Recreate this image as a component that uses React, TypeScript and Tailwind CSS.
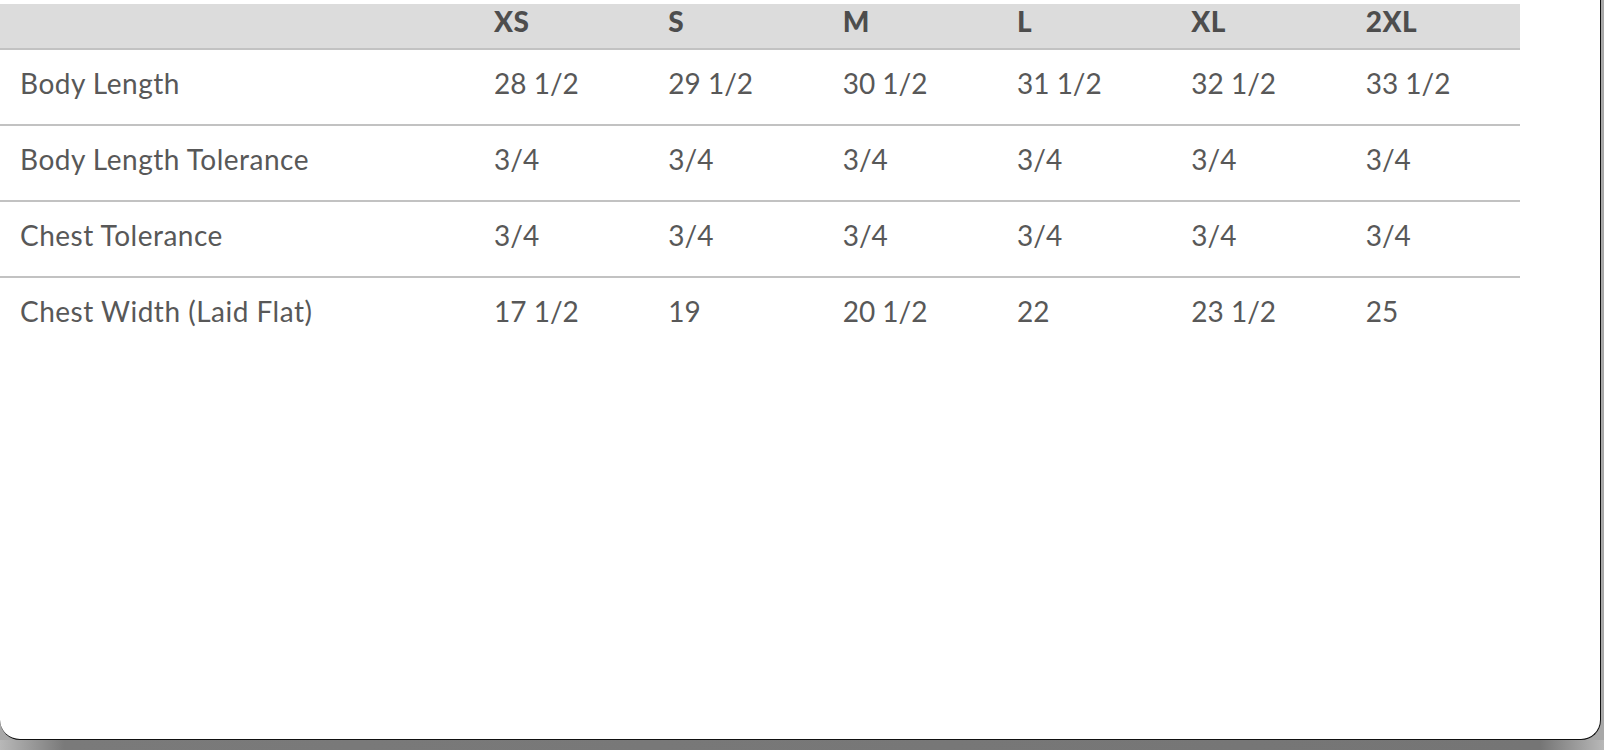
const sizes = ["XS", "S", "M", "L", "XL", "2XL"];

const rows = [
  { label: "Body Length", values: ["28 1/2", "29 1/2", "30 1/2", "31 1/2", "32 1/2", "33 1/2"] },
  { label: "Body Length Tolerance", values: ["3/4", "3/4", "3/4", "3/4", "3/4", "3/4"] },
  { label: "Chest Tolerance", values: ["3/4", "3/4", "3/4", "3/4", "3/4", "3/4"] },
  { label: "Chest Width (Laid Flat)", values: ["17 1/2", "19", "20 1/2", "22", "23 1/2", "25"] },
];

const cols = "grid grid-cols-[474px_repeat(6,174.33px)]";

export default function App() {
  return (
    <div className="flex h-[750px] w-full flex-col bg-[#a8a8a8] font-['Lato','Liberation_Sans',sans-serif] text-[28px] text-[#585858]">
      <div className="h-[740px] w-[1601px] rounded-b-[20px] border-r border-b border-[#111] bg-white pt-[4px]">
        <div className="w-[1520px]">
          <div className={`${cols} h-[46px] border-b-2 border-[#c2c2c2] bg-[#dcdcdc]`}>
            <div />
            {sizes.map((s) => (
              <div key={s} className="pl-5 font-black leading-[34px] tracking-[0.5px] text-[#4d4d4d]">
                {s}
              </div>
            ))}
          </div>
          {rows.map((r, i) => (
            <div
              key={r.label}
              className={`${cols} h-[76px] ${i < rows.length - 1 ? "border-b-2 border-[#c2c2c2]" : ""}`}
            >
              <div className="pl-5 pt-4 leading-[34px] tracking-[0.5px]">{r.label}</div>
              {r.values.map((v, j) => (
                <div key={j} className="pl-5 pt-4 leading-[34px]">
                  {v}
                </div>
              ))}
            </div>
          ))}
        </div>
      </div>
      <div className="h-[10px] w-full bg-[linear-gradient(to_right,#b8b8b8,#7a7a7a_4%,#757575_96%,#b8b8b8)]" />
    </div>
  );
}
